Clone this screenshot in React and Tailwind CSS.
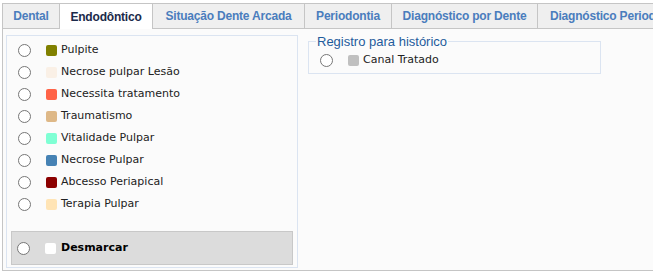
import React from 'react';

const tabs = [
  { label: 'Dental', w: 'w-[58px] justify-center' },
  { label: 'Endodôntico', w: 'w-[94px] justify-center', active: true },
  { label: 'Situação Dente Arcada', w: 'w-[153px] justify-center' },
  { label: 'Periodontia', w: 'w-[88px] justify-center' },
  { label: 'Diagnóstico por Dente', w: 'w-[147px] justify-center' },
  { label: 'Diagnóstico Periodontal', w: 'w-[175px] justify-start pl-[12px]' },
];

const items = [
  { label: 'Pulpite', color: 'bg-[#808000]' },
  { label: 'Necrose pulpar Lesão', color: 'bg-[#faf0e6]' },
  { label: 'Necessita tratamento', color: 'bg-[#ff6347]' },
  { label: 'Traumatismo', color: 'bg-[#deb887]' },
  { label: 'Vitalidade Pulpar', color: 'bg-[#7fffd4]' },
  { label: 'Necrose Pulpar', color: 'bg-[#4682b4]' },
  { label: 'Abcesso Periapical', color: 'bg-[#8b0000]' },
  { label: 'Terapia Pulpar', color: 'bg-[#ffe4b5]' },
];

const Radio = () => (
  <span className="block w-[13px] h-[13px] rounded-full border border-[#767676] bg-white mr-[15px] shrink-0" />
);

const Option = ({ label, color, bold }) => (
  <div className="h-[22px] flex items-center">
    <Radio />
    <span className={`block w-[11px] h-[11px] rounded-[2px] mr-[4px] ${color}`} />
    <span className={bold ? 'font-bold text-black' : 'text-[#222]'}>{label}</span>
  </div>
);

export default function App() {
  return (
    <div className="w-[653px] h-[273px] overflow-hidden bg-white pt-[3px] pl-[2px] font-['Liberation_Sans',Arial,sans-serif]">
      <div className="flex items-start h-[25px] w-[760px]">
        {tabs.map((t, i) => (
          <div
            key={t.label}
            className={`${t.w} shrink-0 flex items-center whitespace-nowrap border border-b-0 border-[#c5c5c5] text-[12px] font-bold tracking-[-0.2px] ${i > 0 ? '-ml-px' : ''} ${
              t.active
                ? 'h-[26px] bg-white text-[#1b2a4a] relative z-10'
                : 'h-[25px] bg-[#efefef] text-[#4a7dbd]'
            }`}
          >
            {t.label}
          </div>
        ))}
      </div>
      <div className="w-[700px] h-[243px] border border-[#c5c5c5] bg-[#fbfbfb] flex items-start gap-[10px] pl-[3px] pt-[6px]">
        <fieldset className="w-[292px] h-[233px] border border-[#dbe4f1] shrink-0 text-[11px] font-['DejaVu_Sans',Verdana,sans-serif]">
          <div className="pt-[3px] pl-[11px]">
            {items.map((it) => (
              <Option key={it.label} {...it} />
            ))}
          </div>
          <div className="mt-[16px] mx-[4px] h-[34px] border border-[#c8c8c8] bg-[#dcdcdc] flex items-center pl-[5px]">
            <Radio />
            <span className="block w-[11px] h-[11px] rounded-[2px] mr-[5px] bg-white" />
            <span className="font-bold text-black">Desmarcar</span>
          </div>
        </fieldset>
        <fieldset className="w-[293px] -mt-px border border-[#dbe4f1] shrink-0 pl-[7px] pb-[2px]">
          <legend className="px-[1px] text-[13px] leading-[15px] text-[#1f5c9c]">Registro para histórico</legend>
          <div className="ml-[4px] text-[11px] font-['DejaVu_Sans',Verdana,sans-serif]">
            <Option label="Canal Tratado" color="bg-[#c0c0c0]" />
          </div>
        </fieldset>
      </div>
    </div>
  );
}
